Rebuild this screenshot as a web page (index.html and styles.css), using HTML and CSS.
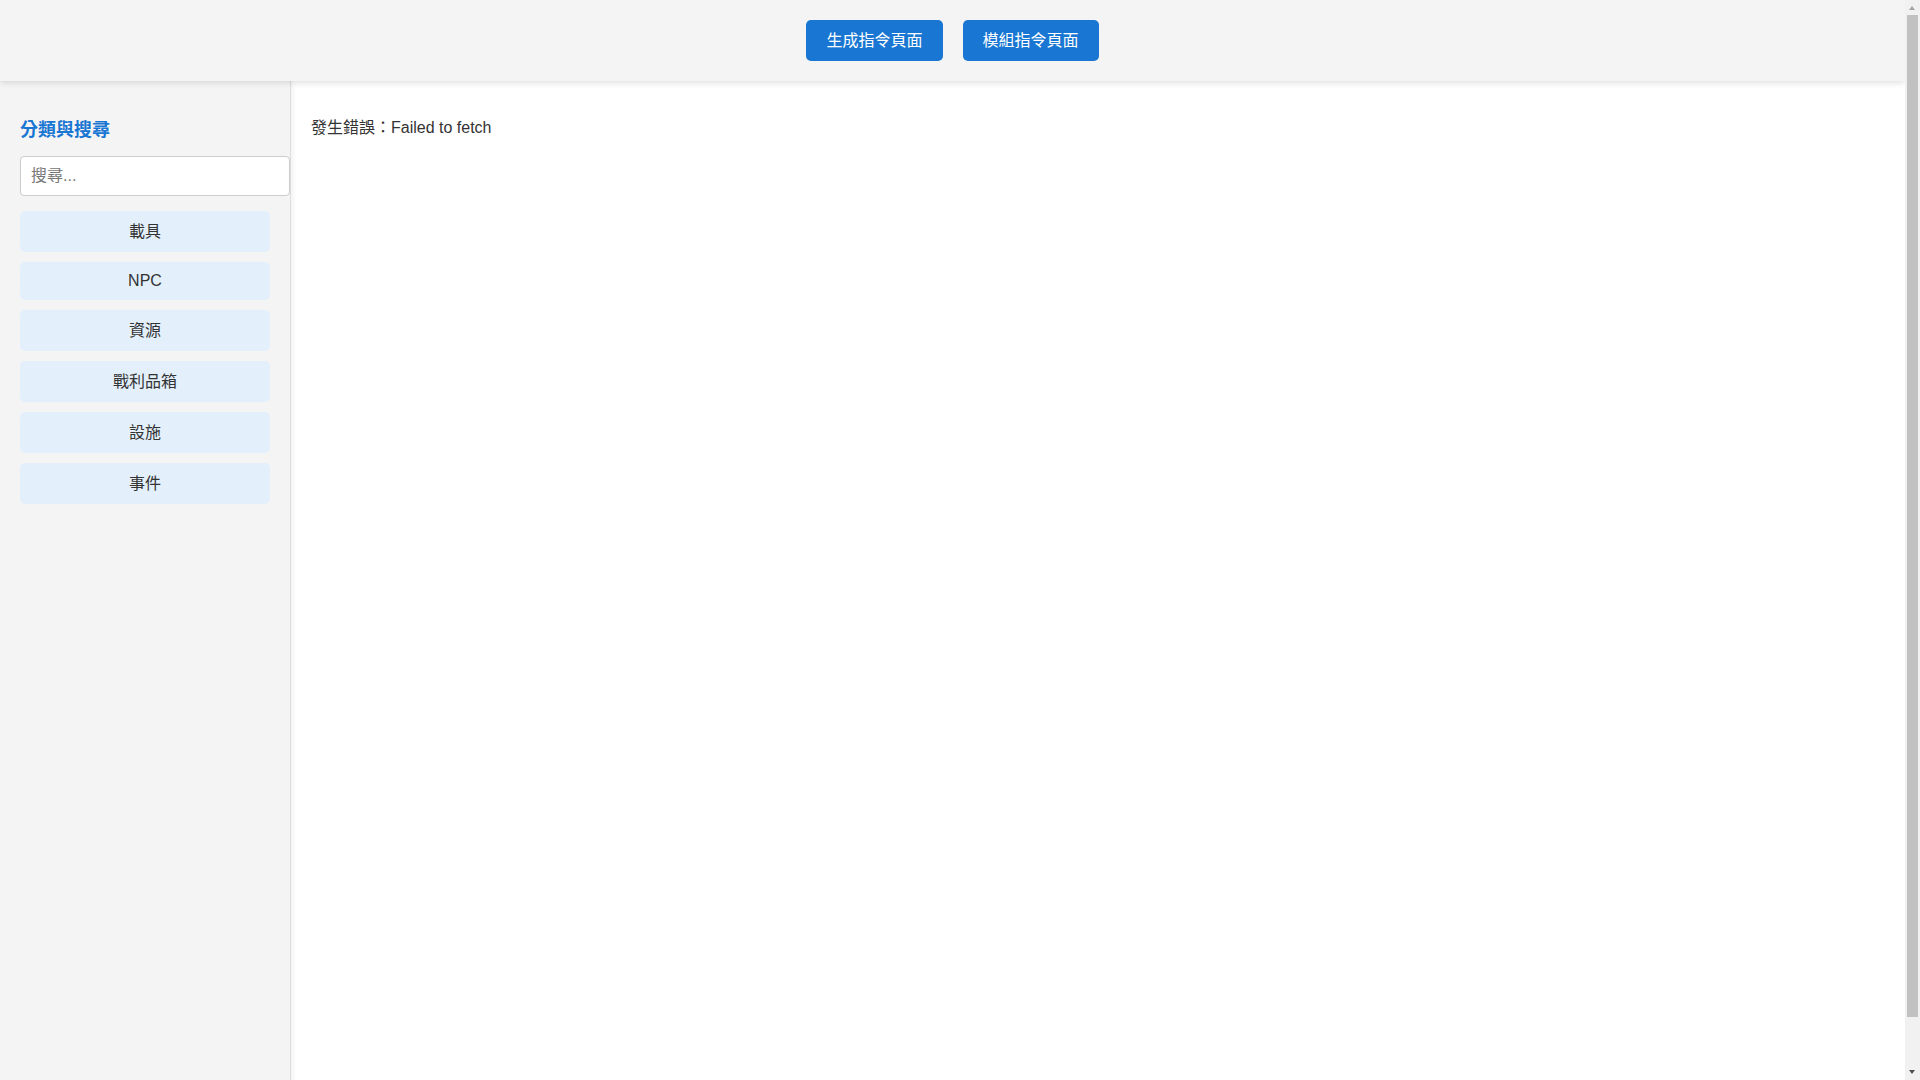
FILE: index.html
```html
<!DOCTYPE html>
<html lang="zh-Hant">
<head>
<meta charset="utf-8">
<title>指令頁面</title>
<link rel="stylesheet" href="styles.css">
</head>
<body>
<div class="page">
  <header class="topbar">
    <nav class="topnav">
      <button class="nav-btn">生成指令頁面</button>
      <button class="nav-btn">模組指令頁面</button>
    </nav>
  </header>
  <div class="layout">
    <aside class="sidebar">
      <h3 class="side-title">分類與搜尋</h3>
      <input class="search" type="text" placeholder="搜尋...">
      <div class="cat-list">
        <button class="cat-btn">載具</button>
        <button class="cat-btn latin">NPC</button>
        <button class="cat-btn">資源</button>
        <button class="cat-btn">戰利品箱</button>
        <button class="cat-btn">設施</button>
        <button class="cat-btn">事件</button>
      </div>
    </aside>
    <main class="content">
      <p class="error">發生錯誤：Failed to fetch</p>
    </main>
  </div>
</div>
<div class="fake-scrollbar" aria-hidden="true">
  <span class="sb-arrow sb-up"></span>
  <span class="sb-thumb"></span>
  <span class="sb-arrow sb-down"></span>
</div>
</body>
</html>
```
FILE: styles.css
```css
html, body {
  margin: 0;
  padding: 0;
}
body {
  font-family: "Liberation Sans", Arial, "Noto Sans CJK TC", sans-serif;
  font-size: 16px;
  color: #333;
  background: #fff;
}
.page {
  margin-right: 15px;
}
.topbar {
  position: relative;
  z-index: 2;
  background: #f4f4f4;
  height: 81px;
  box-sizing: border-box;
  padding: 20px;
  box-shadow: 0 2px 6px rgba(0, 0, 0, 0.12);
}
.topnav {
  display: flex;
  justify-content: center;
  gap: 20px;
}
.nav-btn {
  font-family: inherit;
  font-size: 16px;
  line-height: 21px;
  padding: 10px 20px;
  border: none;
  border-radius: 5px;
  background: #1976d2;
  color: #fff;
  cursor: pointer;
}
.layout {
  display: flex;
  min-height: calc(100vh - 28px);
}
.sidebar {
  width: 250px;
  flex: none;
  background: #f4f4f4;
  padding: 36px 20px 20px;
  border-right: 1px solid #ddd;
  box-shadow: 2px 0 5px rgba(0, 0, 0, 0.06);
  position: relative;
  z-index: 1;
}
.side-title {
  margin: 0;
  font-size: 18px;
  line-height: 27px;
  font-weight: bold;
  color: #1976d2;
}
.search {
  display: block;
  margin-top: 12px;
  width: calc(100% + 20px);
  box-sizing: border-box;
  padding: 9px 10px;
  border: 1px solid #ccc;
  border-radius: 4px;
  font-family: inherit;
  font-size: 16px;
  line-height: 20px;
  color: #333;
  background: #fff;
  outline: none;
}
.search::placeholder {
  color: #777;
}
.cat-list {
  display: flex;
  flex-direction: column;
  gap: 10px;
  margin-top: 15px;
}
.cat-btn {
  font-family: inherit;
  font-size: 16px;
  line-height: 21px;
  padding: 10px;
  border: none;
  border-radius: 5px;
  background: #e3f0fb;
  color: #333;
  text-align: center;
  cursor: pointer;
}
.cat-btn.latin {
  line-height: 18px;
}
.content {
  flex: 1;
  padding: 20px;
}
.error {
  margin: 15px 0;
  line-height: 23px;
}
.fake-scrollbar {
  position: fixed;
  top: 0;
  right: 0;
  bottom: 0;
  width: 15px;
  background: #f1f1f1;
  z-index: 10;
}
.sb-thumb {
  position: absolute;
  top: 15px;
  left: 2px;
  width: 11px;
  height: 1002px;
  background: #c1c1c1;
}
.sb-arrow {
  position: absolute;
  left: 4px;
  width: 0;
  height: 0;
  border-left: 3.5px solid transparent;
  border-right: 3.5px solid transparent;
}
.sb-up {
  top: 6px;
  border-bottom: 4px solid #a3a3a3;
}
.sb-down {
  bottom: 6px;
  border-top: 4px solid #505050;
}
```
